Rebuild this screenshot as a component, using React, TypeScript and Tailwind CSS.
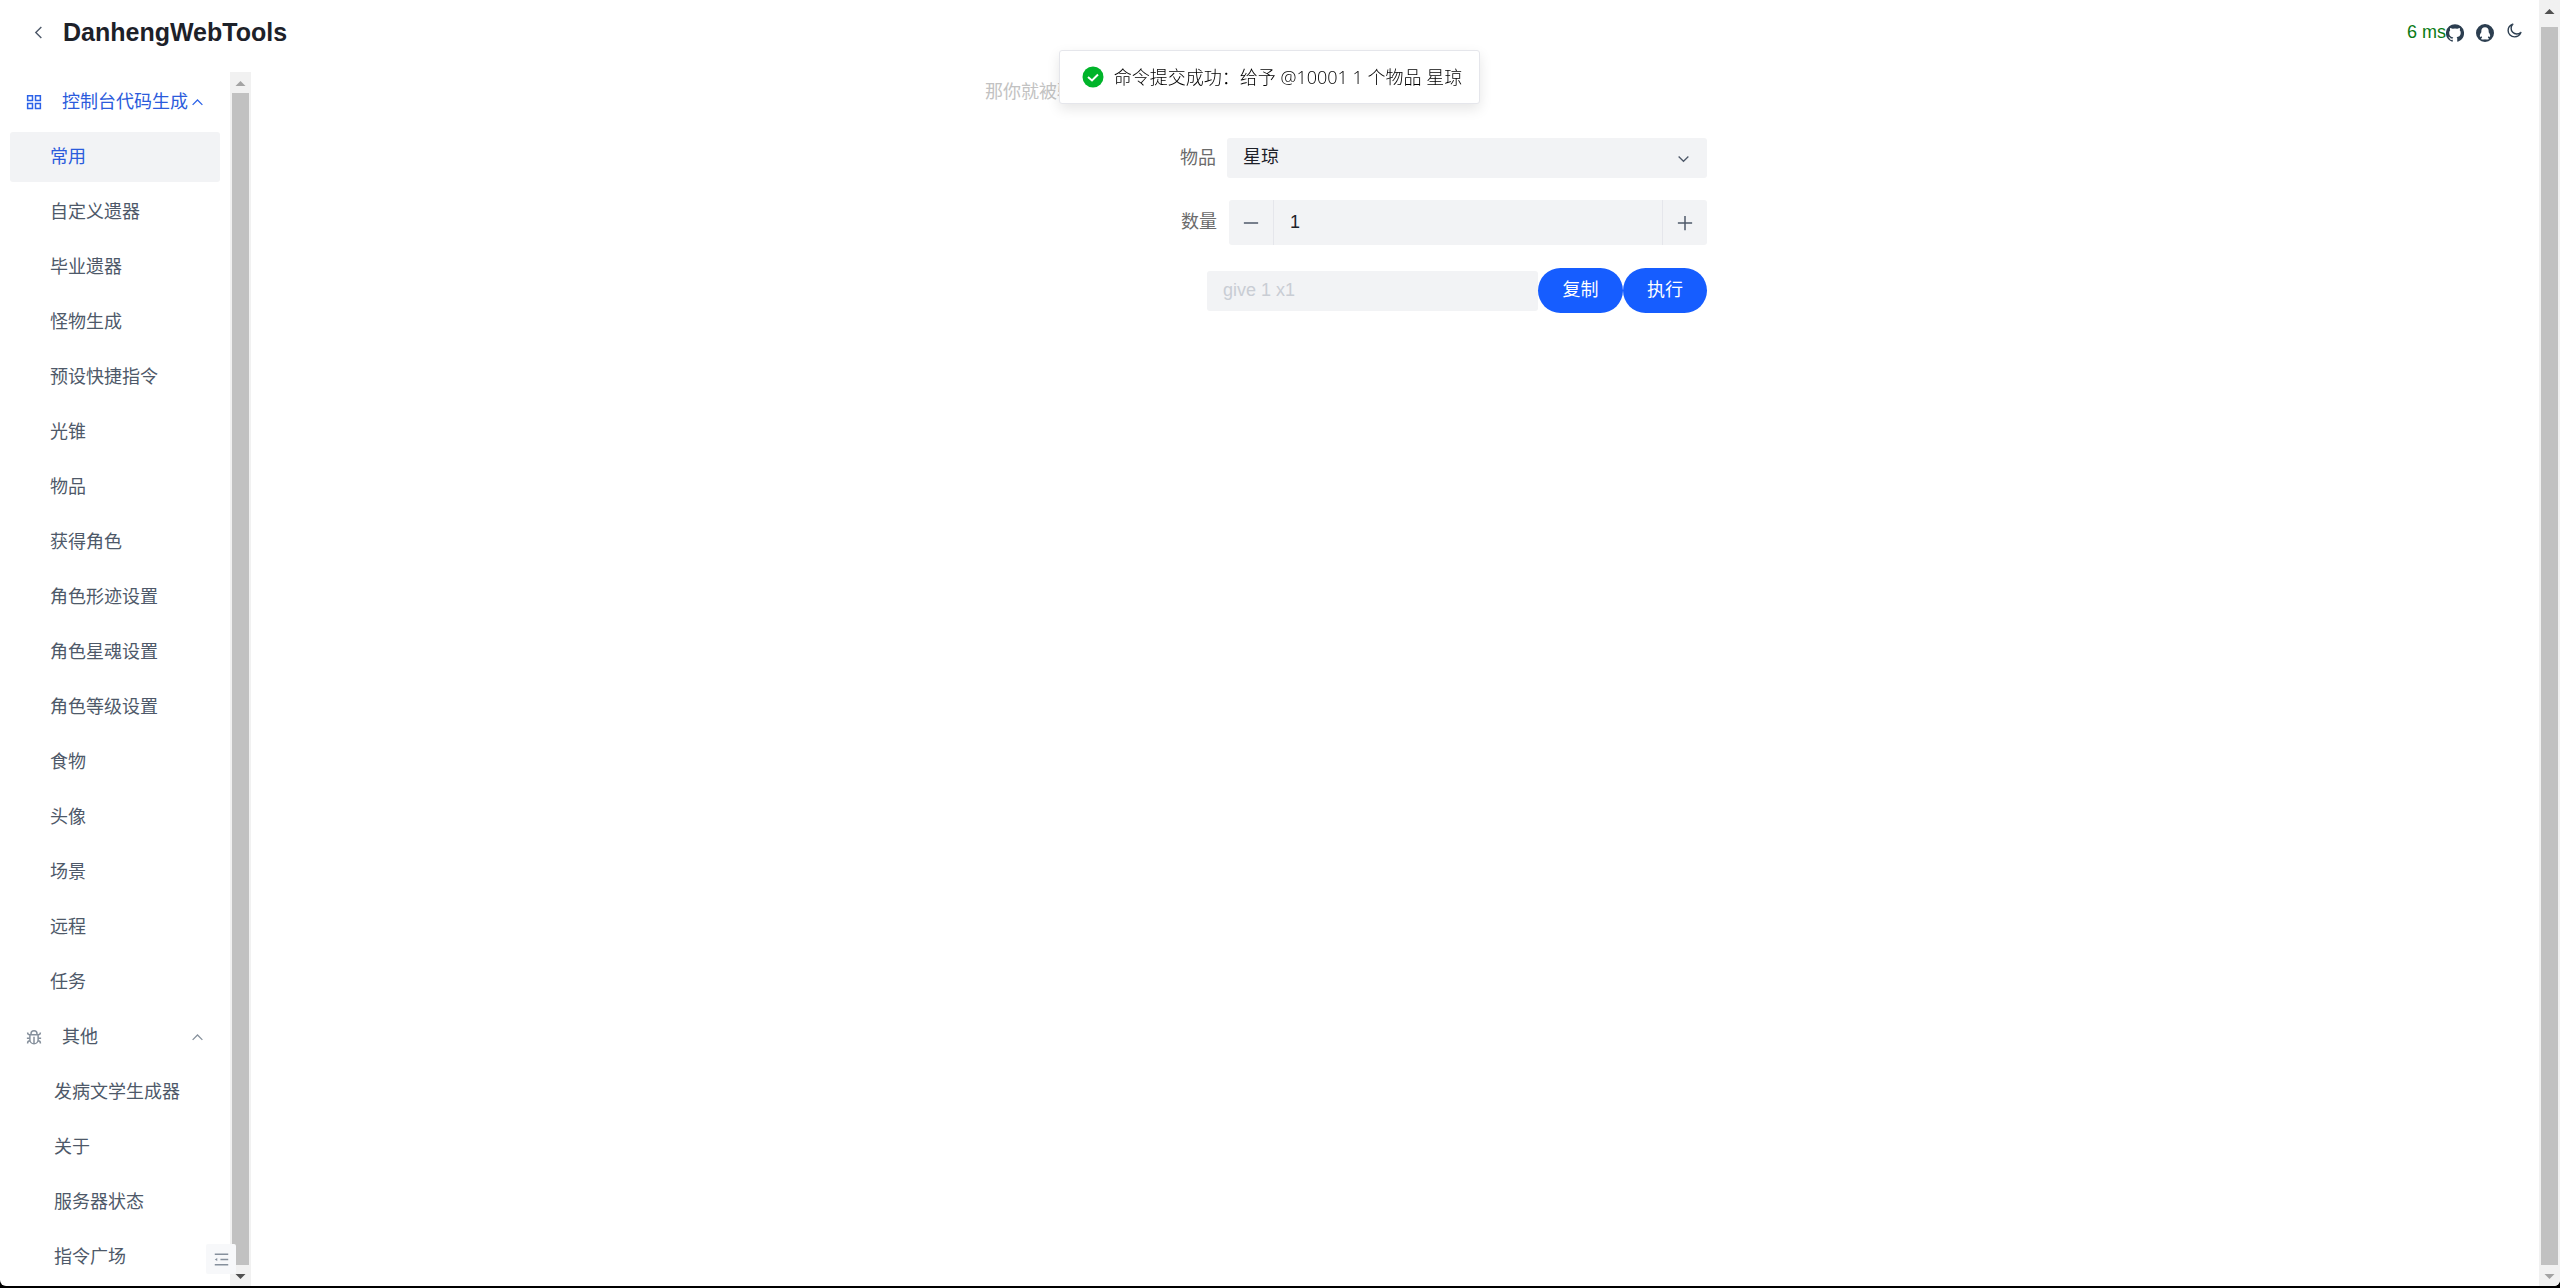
import React, { useState } from "react";

const commandMenu = [
  "常用",
  "自定义遗器",
  "毕业遗器",
  "怪物生成",
  "预设快捷指令",
  "光锥",
  "物品",
  "获得角色",
  "角色形迹设置",
  "角色星魂设置",
  "角色等级设置",
  "食物",
  "头像",
  "场景",
  "远程",
  "任务",
];

const otherMenu = ["发病文学生成器", "关于", "服务器状态", "指令广场"];

function Stroke({ d, size, width = 4, className = "" }: any) {
  return (
    <svg viewBox="0 0 48 48" width={size} height={size} fill="none" stroke="currentColor" strokeWidth={width} className={className} aria-hidden="true">
      <path d={d} />
    </svg>
  );
}

function Github() {
  return (
    <svg viewBox="0 0 24 24" width="18" height="18" fill="currentColor" aria-hidden="true">
      <path d="M12 .3a12 12 0 0 0-3.8 23.4c.6.1.8-.3.8-.6v-2c-3.3.7-4-1.6-4-1.6-.6-1.4-1.4-1.8-1.4-1.8-1-.7.1-.7.1-.7 1.2 0 1.9 1.2 1.9 1.2 1 1.8 2.8 1.3 3.5 1 0-.8.4-1.3.7-1.6-2.7-.3-5.500-1.300-5.500-6 0-1.200.5-2.300 1.300-3.100-.2-.4-.6-1.600 0-3.200 0 0 1-.3 3.400 1.200a11.500 11.500 0 0 1 6 0c2.300-1.500 3.300-1.200 3.300-1.200.6 1.600.2 2.800 0 3.200.9.8 1.300 1.900 1.300 3.200 0 4.600-2.800 5.600-5.500 5.900.5.4.9 1 .9 2.200v3.300c0 .3.1.7.8.6A12 12 0 0 0 12 .3" />
    </svg>
  );
}

function QQ() {
  return (
    <svg viewBox="0 0 24 24" width="18" height="18" fill="currentColor" fillRule="evenodd" aria-hidden="true">
      <path d="M12 0a12 12 0 1 0 0 24 12 12 0 0 0 0-24zM12 4.200c3 0 4.900 2.200 4.900 5.200v1.500c1 1.300 2 3.200 2 4.900 0 1.200-.4 1.700-.9 1.400-.4-.2-.8-.7-1-1.100-.2.800-.6 1.500-1.200 2.100.9.400 1.400.8 1.400 1.300 0 .9-1.600 1.300-3.200 1.300-.9 0-1.600-.2-2-.5-.4.3-1.100.5-2 .5-1.600 0-3.200-.4-3.200-1.300 0-.5.5-.9 1.400-1.300-.6-.6-1-1.300-1.200-2.100-.2.400-.6.900-1 1.100-.5.300-.9-.2-.9-1.400 0-1.700 1-3.600 2-4.900v-1.500c0-3 1.900-5.200 4.900-5.200z" />
    </svg>
  );
}

// the arrow buttons keep their glyph at the same height, only the track length differs
function Scrollbar({ top, bottom, head = 21 }: { top: string; bottom: string; head?: number }) {
  return (
    <div className="flex w-[21px] shrink-0 flex-col bg-[#f1f1f1]" aria-hidden="true">
      <svg viewBox={`0 0 21 ${head}`} width="21" height={head} fill={top}>
        <path d="M10.500 9l5 5h-10z" />
      </svg>
      <div className="mx-[2px] flex-1 bg-[#c1c1c1]" />
      <svg viewBox="0 0 21 21" width="21" height="21" fill={bottom}>
        <path d="M10.500 14l5-5h-10z" />
      </svg>
    </div>
  );
}

function MenuGroup({ title, icon, items, active, setActive, titleClass, iconClass, indent }: any) {
  return (
    <li>
      <button className={`flex h-[50px] w-full items-center pl-[15px] pr-[15px] text-left ${titleClass}`}>
        <span className={iconClass}>{icon}</span>
        <span className="ml-[19px] flex-1 whitespace-nowrap">{title}</span>
        <Stroke d="M39.600 31.500 24 16 8.400 31.500" size={15} className={iconClass} />
      </button>
      <ul className="mt-[5px] flex flex-col gap-[5px]">
        {items.map((name: string) => (
          <li key={name}>
            <a
              href="#"
              onClick={() => setActive(name)}
              className={`flex h-[50px] items-center rounded-[3px] ${indent} ${active === name ? "bg-[#f2f3f5] text-[#2b5bdc]" : "text-[#4e5969]"}`}
            >
              {name}
            </a>
          </li>
        ))}
      </ul>
    </li>
  );
}

export default function App() {
  const [active, setActive] = useState("常用");
  const [count, setCount] = useState(1);

  return (
    <div className="h-screen bg-black pb-[2px] font-['Liberation_Sans','Noto_Sans_CJK_SC',sans-serif] text-[18px]">
      <div className="flex h-full overflow-hidden rounded-b-[6px] bg-white">
        <div className="flex min-w-0 flex-1 flex-col">
          <header className="flex h-[72px] shrink-0 items-center pb-[7px] pl-[30px] pr-4">
            <button aria-label="返回" className="text-[#4e5969]">
              <Stroke d="M32 8.400 16.400 24 32 39.600" size={17} />
            </button>
            <h1 className="ml-4 flex-1 text-[25px] font-bold text-[#1d2129]">DanhengWebTools</h1>
            <span className="text-[#0a7a14]">6 ms</span>
            <nav className="flex items-center gap-3 text-[#2c3e50]">
              <a href="#" aria-label="GitHub">
                <Github />
              </a>
              <a href="#" aria-label="QQ">
                <QQ />
              </a>
              <button aria-label="深色模式" className="pb-1">
                <Stroke d="M42.100 29.900c.1-.3-.2-.6-.5-.5A15.500 15.500 0 0 1 19.200 6.600c.1-.3-.1-.6-.4-.5C11.600 8.800 6 15.700 6 24c0 10.200 8.200 18 18 18 8 0 15.200-4.900 18.100-12.100Z" size={17} />
              </button>
            </nav>
          </header>

          <div className="flex min-h-0 flex-1">
            <aside className="relative flex w-[251px] shrink-0">
              <ul className="flex flex-1 flex-col gap-[5px] overflow-hidden px-[10px] pt-[5px]">
                <MenuGroup
                  title="控制台代码生成"
                  icon={<Stroke d="M7 7h13v13H7V7ZM28 7h13v13H28V7ZM7 28h13v13H7V28ZM28 28h13v13H28V28Z" size={18} />}
                  items={commandMenu}
                  active={active}
                  setActive={setActive}
                  titleClass="text-[#2b5bdc]"
                  iconClass="text-[#2b62e8]"
                  indent="pl-10"
                />
                <MenuGroup
                  title="其他"
                  icon={
                    <Stroke
                      d="M24 42c-6.100 0-11-4.900-11-11V18h22v13c0 6.100-4.900 11-11 11ZM24 42V23M35 27h8M5 27h8M41 41v-1a6 6 0 0 0-6-6M41 12a6 6 0 0 1-6 6M7 41v-1a6 6 0 0 1 6-6M7 12a6 6 0 0 0 6 6M16 18v-3a8 8 0 1 1 16 0v3"
                      size={18}
                    />
                  }
                  items={otherMenu}
                  active={active}
                  setActive={setActive}
                  titleClass="text-[#4e5969]"
                  iconClass="text-[#86909c]"
                  indent="pl-[44px]"
                />
              </ul>
              <Scrollbar top="#a3a3a3" bottom="#505050" />
              <button aria-label="收起菜单" className="absolute bottom-3 right-[15px] flex size-[30px] items-center justify-center rounded-[2px] bg-[#f7f8fa] text-[#86909c]">
                <svg viewBox="0 0 48 48" width="17" height="17" fill="none" stroke="currentColor" strokeWidth="4" aria-hidden="true">
                  <path d="M43 9H5M43 24H21M43 39H5" />
                  <path d="M12 28.500 5 24l7-4.500Z" fill="currentColor" stroke="none" />
                </svg>
              </button>
            </aside>

            <main className="flex flex-1 justify-center">
              <form className="mr-[98px] flex w-[722px] flex-col" onSubmit={(e) => e.preventDefault()}>
                <p className="mt-[6px] leading-7 text-[#c2c2c2]">那你就被骗了</p>
                <div className="mt-8 flex items-center justify-end gap-[11px]">
                  <label htmlFor="item" className="text-[#6b6b6b]">物品</label>
                  <div className="relative w-[480px]">
                    <select id="item" className="block h-10 w-full appearance-none rounded-[3px] bg-[#f2f3f5] px-4 pb-[2px] text-[#1d2129]">
                      <option>星琼</option>
                    </select>
                    <Stroke d="M39.600 17.400 24 33 8.400 17.400" size={15} className="pointer-events-none absolute right-4 top-[13px] text-[#4e5969]" />
                  </div>
                </div>
                <div className="mt-[22px] flex items-center justify-end gap-3">
                  <label htmlFor="count" className="text-[#6b6b6b]">数量</label>
                  <div className="flex h-[45px] w-[478px] overflow-hidden rounded-[3px] bg-[#f2f3f5] text-[#4e5969]">
                    <button type="button" aria-label="减少" className="flex w-[45px] items-center justify-center border-r border-[#e5e6eb]" onClick={() => setCount(count - 1)}>
                      <Stroke d="M5 24h38" size={18} />
                    </button>
                    <input
                      id="count"
                      type="text"
                      className="min-w-0 flex-1 bg-transparent px-4 text-[#1d2129] outline-none"
                      value={count}
                      onChange={(e) => setCount(Number(e.target.value) || 0)}
                    />
                    <button type="button" aria-label="增加" className="flex w-[45px] items-center justify-center border-l border-[#e5e6eb]" onClick={() => setCount(count + 1)}>
                      <Stroke d="M5 24h38M24 5v38" size={18} />
                    </button>
                  </div>
                </div>
                <div className="mt-[23px] flex items-center justify-end">
                  <input
                    type="text"
                    aria-label="指令"
                    disabled
                    className="h-10 w-[331px] rounded-[3px] bg-[#f2f3f5] px-4 text-[#c9cdd4]"
                    value={`give 1 x${count}`}
                  />
                  <button type="button" className="h-[45px] w-[85px] rounded-full bg-[#165dff] text-white">复制</button>
                  <button type="submit" className="h-[45px] w-[84px] rounded-full bg-[#165dff] text-white">执行</button>
                </div>
              </form>
            </main>
          </div>
        </div>

        <Scrollbar top="#505050" bottom="#a3a3a3" head={27} />
      </div>

      <div role="status" className="fixed inset-x-0 top-[50px] mr-[21px] flex justify-center">
        <div className="flex h-[54px] items-center gap-[10px] rounded-[3px] border border-[#e5e6eb] bg-white pl-[22px] pr-[17px] text-[18px] text-black shadow-[0_5px_13px_rgba(0,0,0,0.1)]">
          <svg viewBox="0 0 22 22" width="22" height="22" fill="none" aria-hidden="true">
            <circle cx="11" cy="11" r="10.500" fill="#00b42a" />
            <path d="M6 11l4 3.500 6-6" stroke="#fff" strokeWidth="2" />
          </svg>
          <span className="whitespace-nowrap font-['Open_Sans','Noto_Sans_CJK_SC',sans-serif] font-light">命令提交成功：给予 @10001 1 个物品 星琼</span>
        </div>
      </div>
    </div>
  );
}
